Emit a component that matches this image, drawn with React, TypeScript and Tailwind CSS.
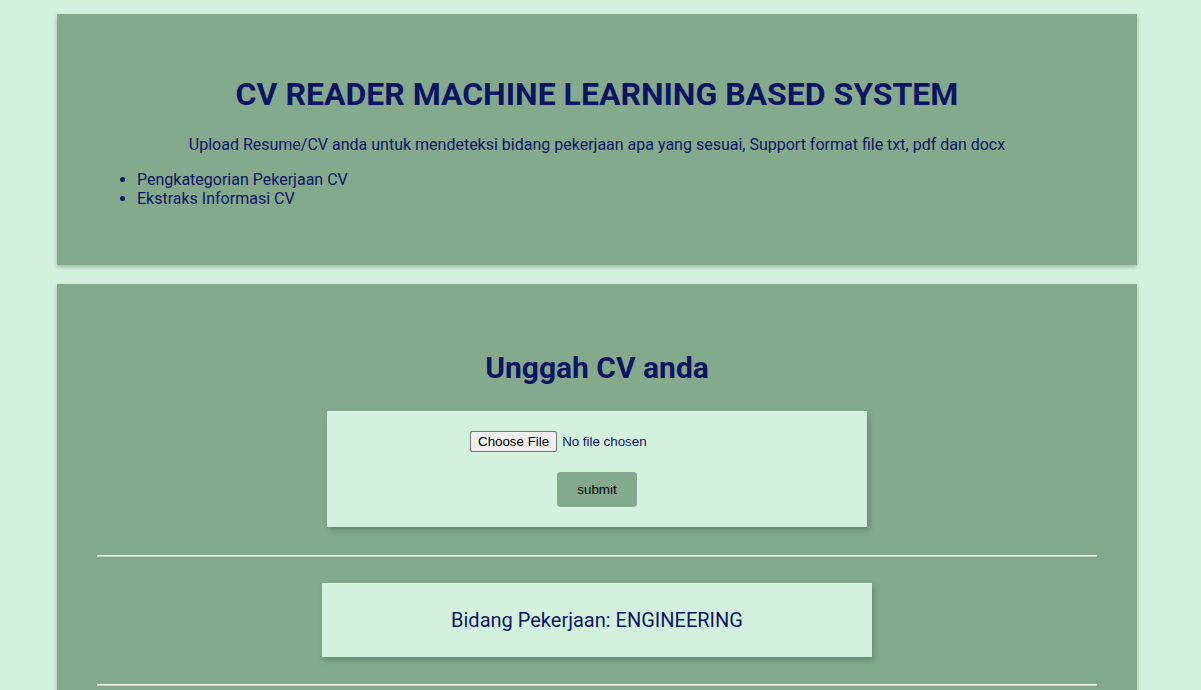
import React from 'react';

// CV reader upload page
export default function App() {
  return (
    <div className="h-[690px] overflow-hidden bg-[#d4f1e0] pt-[14px] font-['Roboto',sans-serif] text-[#0b1463]">
      {/* Intro card */}
      <section className="ml-[57px] w-[1080px] bg-[#84a98c] px-10 pt-[62px] pb-[56px] shadow-[0_2px_4px_rgba(0,0,0,0.25)]">
        <h1 className="text-center text-[32px] font-bold leading-[37.5px]">
          CV READER MACHINE LEARNING BASED SYSTEM
        </h1>
        <p className="mt-[22px] text-center text-base leading-[18.75px]">
          Upload Resume/CV anda untuk mendeteksi bidang pekerjaan apa yang sesuai, Support format file txt, pdf dan docx
        </p>
        <ul className="mt-[17px] list-disc pl-10 text-base leading-[18.75px]">
          <li>Pengkategorian Pekerjaan CV</li>
          <li>Ekstraks Informasi CV</li>
        </ul>
      </section>

      {/* Upload card */}
      <section className="mt-[19px] ml-[57px] w-[1080px] bg-[#84a98c] px-10 pt-[66px] pb-10 shadow-[0_2px_4px_rgba(0,0,0,0.25)]">
        <h2 className="text-center text-[30px] font-bold leading-[35px]">Unggah CV anda</h2>

        <form className="mx-auto mt-[26px] flex w-[540px] flex-col items-center gap-5 bg-[#d4f1e0] py-5 shadow-[2px_3px_6px_rgba(0,0,0,0.22)]">
          <input
            type="file"
            className="w-[254px] font-['Liberation_Sans',Arial,sans-serif] text-[13.33px] leading-[15px] text-[#0b1463] file:mr-[5px] file:rounded-[2px] file:border file:border-solid file:border-[#767676] file:bg-[#efefef] file:px-[7px] file:py-[2px] file:text-black"
          />
          <button
            type="button"
            className="rounded-[4px] bg-[#84a98c] px-5 py-[10px] font-['Liberation_Sans',Arial,sans-serif] text-[13.33px] leading-[15px] text-black"
          >
            submit
          </button>
        </form>

        <hr className="mt-[28px] h-[2px] border-t border-b border-t-[#f2f2f2] border-b-[#c9d2cb]" />

        <div className="mx-auto mt-[26px] flex h-[74px] w-[550px] items-center justify-center bg-[#d4f1e0] shadow-[2px_3px_6px_rgba(0,0,0,0.22)]">
          <span className="text-[20px]">Bidang Pekerjaan: ENGINEERING</span>
        </div>

        <hr className="mt-[27px] h-[2px] border-t border-b border-t-[#f2f2f2] border-b-[#c9d2cb]" />
      </section>
    </div>
  );
}
